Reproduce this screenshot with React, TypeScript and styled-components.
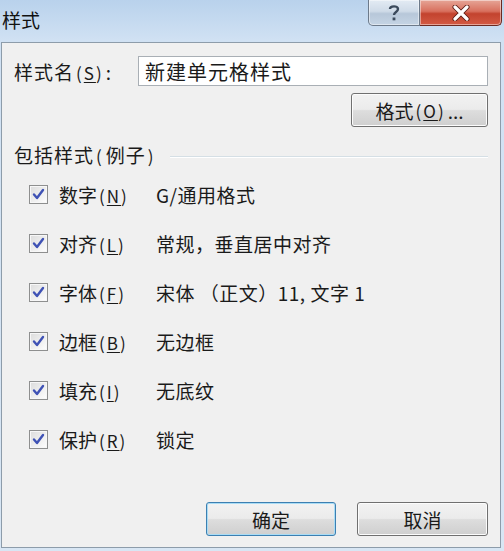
import { FC } from "react";
import styled, { createGlobalStyle } from "styled-components";

const GlobalStyle = createGlobalStyle`
  html, body {
    margin: 0;
    padding: 0;
    background: #d6e5f4;
  }
  * {
    box-sizing: border-box;
  }
`;

const Window = styled.div`
  width: 504px;
  height: 551px;
  display: flex;
  flex-direction: column;
  background: linear-gradient(to bottom, #b9d2ec 0%, #d0e1f3 40px, #d8e6f4 100%);
  font-family: "Noto Sans CJK SC", "Noto Sans", sans-serif;
  color: #1a1a1a;
`;

const TitleBar = styled.div`
  height: 42px;
  display: flex;
  align-items: flex-start;
  justify-content: space-between;
  padding-right: 2px;
`;

const Title = styled.div`
  font-size: 19px;
  line-height: 19px;
  padding: 10px 0 0 2px;
  color: #111;
`;

const Caption = styled.div`
  display: flex;
`;

const CapButton = styled.div<{ $close?: boolean }>`
  height: 26px;
  width: ${(p) => (p.$close ? "82px" : "52px")};
  display: flex;
  align-items: center;
  justify-content: center;
  border: 1px solid ${(p) => (p.$close ? "#6b2a22" : "#6d7a8a")};
  border-top: none;
  border-left: ${(p) => (p.$close ? "none" : "1px solid #6d7a8a")};
  border-radius: ${(p) => (p.$close ? "0 0 5px 0" : "0 0 0 5px")};
  background: ${(p) =>
    p.$close
      ? "linear-gradient(to bottom, #e6a597 0%, #d8705e 45%, #c3432e 55%, #d35a44 100%)"
      : "linear-gradient(to bottom, #e3ebf4 0%, #cfdbe8 45%, #b7c7d9 55%, #c5d4e4 100%)"};
  box-shadow: inset 0 0 0 1px rgba(255, 255, 255, 0.45);
`;

const Panel = styled.div`
  flex: 1;
  margin: 0 3px 3px 1px;
  border: 1px solid #8d9caa;
  background: #f0f0f0;
  display: flex;
  flex-direction: column;
  padding: 13px 12px 0 12px;
  font-size: 19px;
`;

const NameRow = styled.div`
  display: flex;
  align-items: center;
  gap: 26px;
`;

const Label = styled.span`
  white-space: nowrap;
  letter-spacing: 1px;
`;

const Key = styled.span`
  font-size: 17px;
  letter-spacing: 2px;
  margin: 0 2px;
  & u {
    text-decoration-thickness: 1px;
    text-underline-offset: 2px;
  }
`;

const TextInput = styled.div`
  flex: 1;
  height: 30px;
  border: 1px solid #a9afb5;
  background: #fff;
  padding-left: 6px;
  display: flex;
  align-items: center;
  font-size: 20px;
  letter-spacing: 1px;
`;

const RightRow = styled.div`
  display: flex;
  justify-content: flex-end;
  margin-top: 7px;
`;

const Button = styled.div<{ $width: number; $default?: boolean }>`
  width: ${(p) => p.$width}px;
  height: 34px;
  border: 1px solid ${(p) => (p.$default ? "#3c7fb1" : "#707070")};
  border-radius: 3px;
  display: flex;
  align-items: center;
  justify-content: center;
  font-size: 19px;
  background: linear-gradient(to bottom, #f2f2f2 0%, #ebebeb 48%, #dddddd 52%, #cfcfcf 100%);
  box-shadow: inset 0 0 0 1px ${(p) => (p.$default ? "#a9dcf5" : "#fcfcfc")};
`;

const GroupHeader = styled.div`
  display: flex;
  align-items: center;
  margin-top: 14px;
  gap: 12px;
`;

const Rule = styled.div`
  flex: 1;
  height: 2px;
  border-top: 1px solid #d5dfe5;
  border-bottom: 1px solid #ffffff;
  margin-top: 4px;
`;

const List = styled.div`
  display: flex;
  flex-direction: column;
  gap: 23px;
  padding: 13px 0 0 15px;
`;

const CheckRow = styled.div`
  display: flex;
  align-items: center;
  height: 26px;
`;

const Box = styled.div`
  width: 19px;
  height: 19px;
  border: 1px solid #8e8f8f;
  background: linear-gradient(135deg, #dcdcdc 0%, #f4f4f4 70%, #ffffff 100%);
  box-shadow: inset 0 0 0 1px #f7f7f7;
  display: flex;
  align-items: center;
  justify-content: center;
  margin-right: 11px;
`;

const ItemLabel = styled.span`
  width: 97px;
  white-space: nowrap;
`;

const Value = styled.span`
  white-space: nowrap;
  letter-spacing: 0.5px;
`;

const Footer = styled.div`
  margin-top: auto;
  display: flex;
  justify-content: flex-end;
  gap: 21px;
  padding: 0 0 11px 0;
`;

const Check: FC = () => (
  <Box>
    <svg width="13" height="13" viewBox="0 0 13 13">
      <path d="M2 6.5 L5 10 L11 2" fill="none" stroke="#3f52b5" strokeWidth="2.4" strokeLinecap="round" strokeLinejoin="round" />
    </svg>
  </Box>
);

type Item = { name: string; key: string; value: string };

const items: Item[] = [
  { name: "数字", key: "N", value: "G/通用格式" },
  { name: "对齐", key: "L", value: "常规，垂直居中对齐" },
  { name: "字体", key: "F", value: "宋体 （正文）11, 文字 1" },
  { name: "边框", key: "B", value: "无边框" },
  { name: "填充", key: "I", value: "无底纹" },
  { name: "保护", key: "R", value: "锁定" },
];

const App: FC = () => {
  return (
    <>
      <GlobalStyle />
      <Window>
        <TitleBar>
          <Title>样式</Title>
          <Caption>
            <CapButton>
              <svg width="14" height="18" viewBox="0 0 14 18">
                <path d="M3 5 C3 1.5 11 1.5 11 5 C11 8 7 8 7 11" fill="none" stroke="#3b4a5c" strokeWidth="2.4" />
                <rect x="5.6" y="13.5" width="2.8" height="2.8" fill="#3b4a5c" />
              </svg>
            </CapButton>
            <CapButton $close>
              <svg width="18" height="16" viewBox="0 0 18 16">
                <path d="M3 2 L15 14 M15 2 L3 14" stroke="#5a1a12" strokeWidth="5" strokeLinecap="round" />
                <path d="M3 2 L15 14 M15 2 L3 14" stroke="#ffffff" strokeWidth="3.2" strokeLinecap="round" />
              </svg>
            </CapButton>
          </Caption>
        </TitleBar>
        <Panel>
          <NameRow>
            <Label>
              样式名<Key>(<u>S</u>)</Key>:
            </Label>
            <TextInput>新建单元格样式</TextInput>
          </NameRow>
          <RightRow>
            <Button $width={137}>
              格式<Key>(<u>O</u>)</Key>...
            </Button>
          </RightRow>
          <GroupHeader>
            <Label>
              包括样式<Key>(</Key>例子<Key>)</Key>
            </Label>
            <Rule />
          </GroupHeader>
          <List>
            {items.map((it) => (
              <CheckRow key={it.key}>
                <Check />
                <ItemLabel>
                  {it.name}
                  <Key>
                    (<u>{it.key}</u>)
                  </Key>
                </ItemLabel>
                <Value>{it.value}</Value>
              </CheckRow>
            ))}
          </List>
          <Footer>
            <Button $width={130} $default>
              确定
            </Button>
            <Button $width={131}>取消</Button>
          </Footer>
        </Panel>
      </Window>
    </>
  );
};

export default App;
